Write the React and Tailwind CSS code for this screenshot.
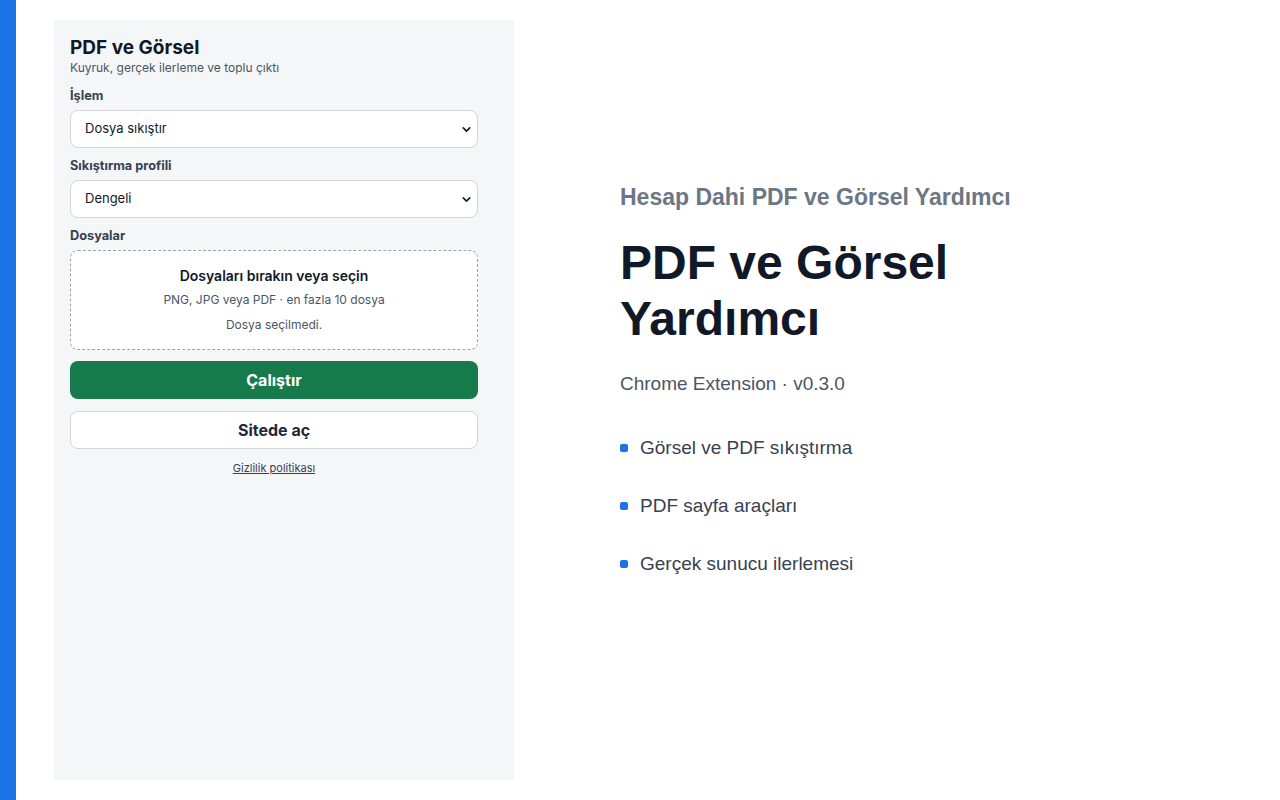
import { ChevronDown } from 'lucide-react'

const OZELLIKLER = ['Görsel ve PDF sıkıştırma', 'PDF sayfa araçları', 'Gerçek sunucu ilerlemesi']

// ── Seçim kutusu ────────────────────────────────────────────────────────────
function Secim({ etiket, secenekler, className }) {
  return (
    <div className={className}>
      <label className="block text-[12.75px] font-bold leading-4 text-[#374151] mb-[6px]">{etiket}</label>
      <div className="relative">
        <select className="w-full h-[38px] appearance-none rounded-lg border border-[#d1d5db] bg-white pl-[14px] pr-8 text-[13px] text-[#111827] outline-none">
          {secenekler.map((s) => (
            <option key={s}>{s}</option>
          ))}
        </select>
        <ChevronDown
          size={13}
          strokeWidth={3}
          className="pointer-events-none absolute right-[5px] top-[13px] text-[#111827]"
        />
      </div>
    </div>
  )
}

function Panel() {
  return (
    <div className="w-[460px] shrink-0 bg-[#f4f6f8] px-4 pt-[16px] font-['Inter',sans-serif]">
      <div className="w-[408px]">
        <h1 className="text-[19px] font-bold leading-6 text-[#111827]">PDF ve Görsel</h1>
        <p className="text-[12px] leading-4 text-[#4b5563]">Kuyruk, gerçek ilerleme ve toplu çıktı</p>

        <Secim className="mt-[12px]" etiket="İşlem" secenekler={['Dosya sıkıştır']} />
        <Secim className="mt-[10px]" etiket="Sıkıştırma profili" secenekler={['Dengeli']} />

        <div className="mt-[10px]">
          <label className="block text-[12.75px] font-bold leading-4 text-[#374151] mb-[6px]">Dosyalar</label>
          <div className="h-[100px] rounded-lg border border-dashed border-[#9ca3af] bg-white flex flex-col items-center pt-[15px]">
            <p className="text-[14px] font-semibold text-[#111827] leading-5">Dosyaları bırakın veya seçin</p>
            <p className="mt-[6px] text-[12px] text-[#4b5563] leading-4">PNG, JPG veya PDF · en fazla 10 dosya</p>
            <p className="mt-[9px] text-[12px] text-[#4b5563] leading-4">Dosya seçilmedi.</p>
          </div>
        </div>

        <button className="mt-[11px] w-full h-[38px] rounded-lg bg-[#177a4b] text-white font-bold text-[16px]">
          Çalıştır
        </button>
        <button className="mt-[12px] w-full h-[38px] rounded-lg border border-[#d1d5db] bg-white text-[#1f2937] font-bold text-[16px]">
          Sitede aç
        </button>
        <div className="mt-[9px] text-center leading-4">
          <a href="#" className="text-[11px] text-[#374151] underline">
            Gizlilik politikası
          </a>
        </div>
      </div>
    </div>
  )
}

export default function App() {
  return (
    <div className="flex h-[800px] bg-white">
      <div className="w-4 shrink-0 bg-[#1b73e8]" />
      <div className="flex py-5 pl-[38px]">
        <Panel />
      </div>
      <div className="pl-[106px] pt-[183px] font-['Liberation_Sans',Arial,sans-serif]">
        <h2 className="text-[23px] font-bold leading-[28px] text-[#6b7785]">Hesap Dahi PDF ve Görsel Yardımcı</h2>
        <h1 className="mt-[24px] text-[48px] font-bold leading-[56px] text-[#111827]">
          PDF ve Görsel
          <br />
          Yardımcı
        </h1>
        <p className="mt-[25px] text-[19px] leading-6 text-[#4b5563]">Chrome Extension · v0.3.0</p>
        <ul className="mt-[40px] space-y-[34px]">
          {OZELLIKLER.map((o) => (
            <li key={o} className="flex items-center gap-3 text-[19px] leading-6 text-[#374151]">
              <span className="w-2 h-2 rounded-[2px] bg-[#1b73e8]" />
              {o}
            </li>
          ))}
        </ul>
      </div>
    </div>
  )
}
